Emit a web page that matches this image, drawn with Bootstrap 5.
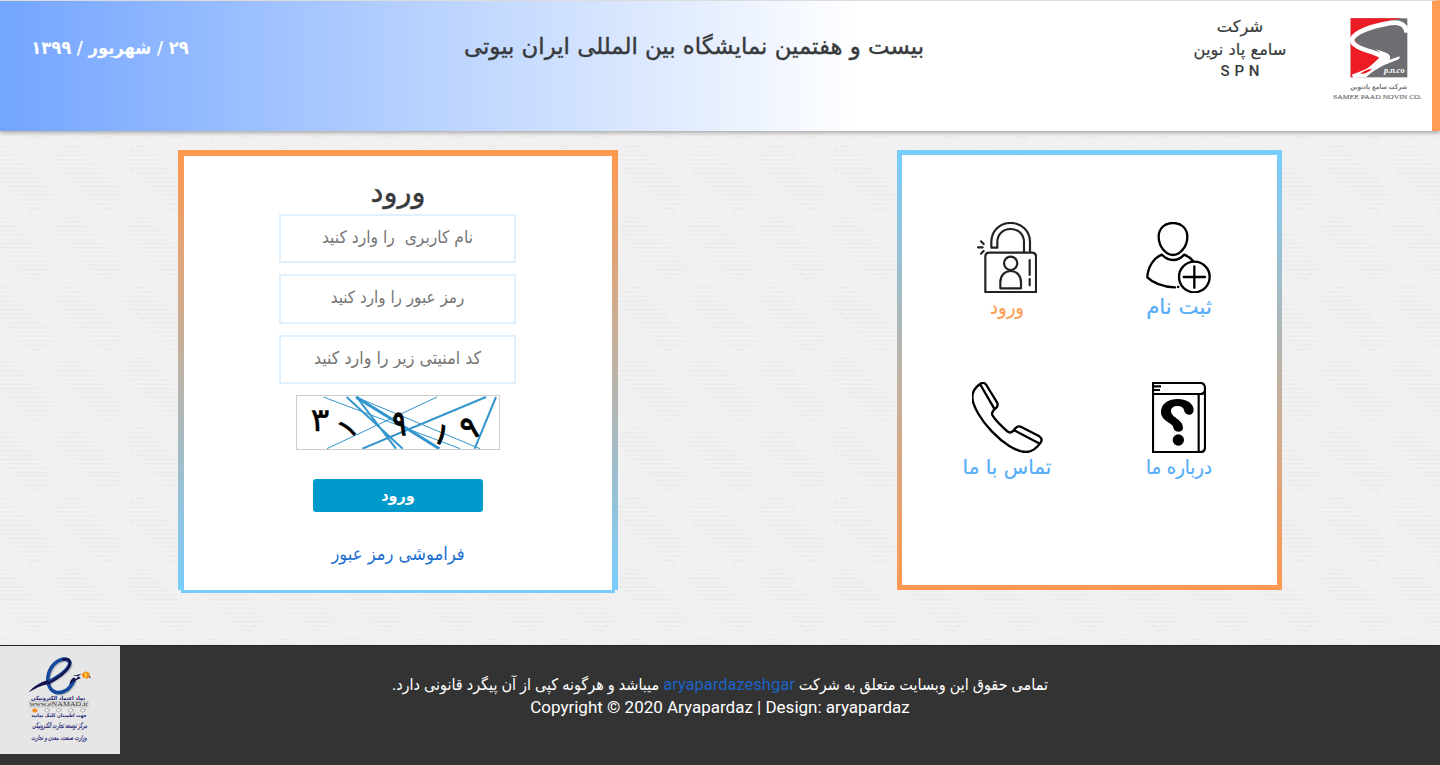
<!DOCTYPE html>
<html lang="fa" dir="rtl">
<head>
<meta charset="utf-8">
<title>ورود</title>
<link href="https://cdn.jsdelivr.net/npm/bootstrap@5.3.0/dist/css/bootstrap.min.css" rel="stylesheet">
<style>
body{font-family:"DejaVu Sans",sans-serif;color:#373a3c;background-color:#f1f1f1;overflow:hidden;
background-image:url("data:image/svg+xml,%3Csvg xmlns='http://www.w3.org/2000/svg' width='70.4' height='70.4' viewBox='0 0 16 16'%3E%3Cdefs%3E%3Cg id='h'%3E%3Cpath fill='%23f1f1f1' d='M0-.5L4.5 4l8 8L8 16.5 4 12.500l-8.500-8.500z'/%3E%3Cpath stroke='%23ebebeb' stroke-width='.3' d='M-1 1h2M-2 2h4M-3 3h6M-4 4h8M-3 5h8M-2 6h8M-1 7h8M0 8h8M1 9h8M2 10h8M3 11h8M4 12h8M5 13h6M6 14h4M7 15h2'/%3E%3Cpath stroke='%23e0e0e0' stroke-width='.25' stroke-linecap='square' d='M0 0h.01M-1 1h.01M1 1h.01M-2 2h.01M2 2h.01M-3 3h.01M3 3h.01M-4 4h.01M4 4h.01M-3 5h.01M5 5h.01M-2 6h.01M6 6h.01M-1 7h.01M7 7h.01M0 8h.01M8 8h.01M1 9h.01M9 9h.01M2 10h.01M10 10h.01M3 11h.01M11 11h.01M4 12h.01M12 12h.01M5 13h.01M11 13h.01M6 14h.01M10 14h.01M7 15h.01M9 15h.01'/%3E%3C/g%3E%3C/defs%3E%3Cpath stroke='%23efefef' stroke-width='.3' d='M0 0v16M1 0v16M2 0v16M3 0v16M4 0v16M5 0v16M6 0v16M7 0v16M8 0v16M9 0v16M10 0v16M11 0v16M12 0v16M13 0v16M14 0v16M15 0v16M16 0v16'/%3E%3Cuse href='%23h'/%3E%3Cuse href='%23h' x='16'/%3E%3C/svg%3E");
background-size:70.4px 70.4px;background-position:.4px 1.6px}
.topbar{height:131px;border-top:1px solid #dcdcdc;border-right:8px solid #ff9d57;background:linear-gradient(to right,#73a5ff,#fff 60%);box-shadow:0 1px 5px rgba(0,0,0,.4)}
.logo-cell{width:110px;padding-top:16px}
.company{width:164px;padding-top:14px;font-size:16.300px;line-height:23px;-webkit-text-stroke:.2px}
.company .latin{display:block;margin-top:-1px;font-family:Roboto,sans-serif;font-weight:500;font-size:15px;word-spacing:1px;-webkit-text-stroke:0}
.page-title{width:928px;font-size:22.8px;line-height:30px;padding-top:30px;margin:0;font-weight:400;-webkit-text-stroke:.4px}
.today{width:220px;margin-right:10px;padding-top:32px;font:700 18.2px/30px "DejaVu Sans Condensed","DejaVu Sans",sans-serif;color:#fff}
.stage{height:514px;padding:19px 158px 0 178px}
.side-box{width:385px;height:440px;border:5px solid;border-image:linear-gradient(#78cdfd,#ff9850) 1;background:#fff;padding:67px 12px 0 0}
.tiles{display:grid;grid-template-columns:172px 172px;grid-auto-rows:160px}
.tiles a{color:#55acf8;text-decoration:none;font-size:20px;line-height:28px;-webkit-text-stroke:.2px}
.tiles a.wide-label{font-size:21.300px}
.tiles a.slim-label{font-size:20px;font-family:"DejaVu Sans Condensed","DejaVu Sans",sans-serif}
.tiles svg{display:block;margin:0 auto}
.tiles a.current{color:#ff9d57}
.login-box{width:440px;height:440px;border:6px solid;border-bottom:0;border-image:linear-gradient(#ff9850,#78cdfd) 1;background:#fff}
.login-box::after{content:"";display:block;height:3px;width:434px;background:#78cdfd;position:absolute;left:-3px;bottom:-3px}
.login-box h1{font-size:29px;line-height:36px;padding-top:18px;margin:0 0 4px;font-weight:400;-webkit-text-stroke:.4px}
.field{width:237px;height:49px;margin:0 1px 11px 0;border:2px solid #dff0ff;border-radius:0;text-align:center;padding:0 0 4px;font:17.300px "DejaVu Sans Condensed","DejaVu Sans",sans-serif;background:#fff}
.field.pass{height:50px;font-size:16.900px}
.field.code{font-size:17.700px}
.field::placeholder{color:#757575;opacity:1}
.captcha{display:block;width:204px;height:55px;border:1px solid #ccc}
.enter{width:170px;height:33px;margin-top:29px;background:#0099cb;color:#fff;border:0;border-radius:3px;font:700 16px/30px "DejaVu Sans Condensed","DejaVu Sans",sans-serif;padding:1px 0 0}
.forgot{color:#1b6fd0;text-decoration:none;font:18.200px/30px "DejaVu Sans Condensed","DejaVu Sans",sans-serif;margin-top:27px}
.foot{height:120px;background:#333;color:#fff;border-top:1px solid #222}
.foot a{color:#1d63c4;text-decoration:none;font-size:16.500px}
.rights{font:16.050px/23px Roboto,"DejaVu Sans Condensed",sans-serif;padding-top:3px}
.copy{font:400 17px/22px Roboto,sans-serif}
.seal{width:120px;height:108px;background:#e6e6e6}
</style>
</head>
<body>
<header class="topbar d-flex text-center">
  <div class="logo-cell">
    <svg width="90" height="86" viewBox="456 53 270 258" style="direction:ltr">
      <rect x="512" y="57" width="170" height="177" fill="#6d6e71"/>
      <path d="M512 57h155C610 66 555 78 527 108c-10 18 8 32 40 44 30 12 42 12 34 28-16 22-50 38-75 54h-14z" fill="#ed1c24"/>
      <path d="M680 100c-2-28-28-34-55-28-50 8-98 26-108 46-6 20 30 31 65 42 24 8 36 16 24 30-20 18-60 32-88 42" fill="none" stroke="#fff" stroke-width="14"/>
      <path d="M585 150c30 8 52 14 44 31l30-10-1 7c-22 12-60 20-86 44l-14 12h-34c30-20 52-36 70-55 12-14 8-20-9-29z" fill="#fff"/>
      <path d="M542 224q8-12 34-16-10 13-34 16z" fill="#ed1c24"/>
      <text x="612" y="221" textLength="62" lengthAdjust="spacingAndGlyphs" font-family="Liberation Serif" font-style="italic" font-weight="700" font-size="23" fill="#fff">p.n.co</text>
      <text x="596" y="268" text-anchor="middle" textLength="170" lengthAdjust="spacingAndGlyphs" font-size="21" font-weight="700" fill="#77787b" font-family="DejaVu Sans">شرکت سامع پادنوین</text>
      <text x="459" y="298" textLength="266" lengthAdjust="spacingAndGlyphs" font-family="Liberation Serif" font-size="21" fill="#6d6e71" stroke="#6d6e71" stroke-width=".5">SAMEE PAAD NOVIN CO.</text>
    </svg>
  </div>
  <div class="company">شرکت<br>سامع پاد نوین<span class="latin">S P N</span></div>
  <h2 class="page-title">بیست و هفتمین نمایشگاه بین المللی ایران بیوتی</h2>
  <div class="today">۲۹ / شهریور / ۱۳۹۹</div>
</header>

<main class="stage d-flex justify-content-between">
  <nav class="side-box">
    <div class="tiles text-center">
      <a href="#" class="wide-label"><svg width="66" height="71" viewBox="590 36 198 213" fill="none" stroke="#000" stroke-width="7" stroke-linejoin="round" stroke-linecap="round">
        <path d="M671 39c-27 0-43 18-43 41 0 28 20 55 43 55s43-27 43-55c0-23-16-41-43-41z"/>
        <path d="M638 134c-27 10-43 40-44 68 18 18 46 28 83 30M638 134c10 11 21 16 33 16s24-5 33-16c12 4 20 10 27 19M686 231h1"/>
        <circle cx="735" cy="201" r="46"/><path d="M735 169v64M703 201h64"/></svg>ثبت نام</a>
      <a href="#" class="current slim-label"><svg width="60" height="71" viewBox="80 36 180 213" fill="none" stroke="#222" stroke-width="6.5" stroke-linejoin="round" stroke-linecap="round">
        <path d="M105 246V140q0-12 12-12h128q12 0 12 12v106zM123 113V96c0-32 24-57 58-57s58 25 58 57v30M123 113h18V96c0-22 16-39 40-39s40 17 40 39v30"/>
        <circle cx="181" cy="160" r="20"/><path d="M150 235v-18c0-20 12-34 31-34s31 14 31 34v18zM238 150v45M238 207v19M92 94l8 8M83 112h14M92 131l8-8"/></svg>ورود</a>
      <a href="#" class="slim-label"><svg width="54" height="71" viewBox="606 36 162 213" fill="none" stroke="#000" stroke-width="6.5">
        <path d="M609 39h142q14 0 14 17v176q0 14-14 14H609zM609 72h142q14 0 14-14M746 72v174M609 49h24M609 60h21"/>
        <path d="M633 123c2-24 24-36 50-36 30 0 48 16 48 32 0 9-6 15-14 15-9 0-14-6-15-14-2-8-9-12-19-12-13 0-20 6-20 15 0 20 36 25 36 50 0 8-6 12-14 12-10 0-15-6-16-16-6-12-38-18-36-46z" fill="#000" stroke="none"/><circle cx="685" cy="210" r="17" fill="#000" stroke="none"/></svg>درباره ما</a>
      <a href="#"><svg width="71" height="71" viewBox="66 36 213 213" fill="none" stroke="#000" stroke-width="7" stroke-linejoin="round">
        <path d="M89 42c-14 10-23 22-23 40 2 54 100 164 162 164 18 0 32-13 43-28 5-8 3-14-4-19l-54-28c-7-4-12-2-17 3-9 13-17 17-25 10-16-14-34-31-44-47-5-8 0-15 10-23 6-5 6-11 3-17l-32-52c-5-8-12-8-19-3zM89 42l44 76M190 180l80 42" transform="translate(1)"/></svg>تماس با ما</a>
    </div>
  </nav>

  <form class="login-box position-relative d-flex flex-column align-items-center">
    <h1>ورود</h1>
    <input class="field" type="text" placeholder="نام کاربری&nbsp; را وارد کنید">
    <input class="field pass" type="password" placeholder="رمز عبور را وارد کنید">
    <input class="field code" type="text" placeholder="کد امنیتی زیر را وارد کنید">
    <svg class="captcha" viewBox="381 48 606 159" style="direction:ltr">
      <g stroke="#3296cc" fill="none"><path stroke-width="3" d="M460 51l410 155M558 51l372 155M471 206L801 51"/><path stroke-width="6" d="M530 51l168 155M560 51l118 155M577 206L948 51M914 206l64-155"/><path stroke-width="9" d="M558 51l250 155"/></g>
      <g font-family="DejaVu Sans" font-size="88" fill="#000" stroke="#000" stroke-width="3" text-anchor="middle">
        <text transform="translate(450 152) scale(1.2 1.1)" stroke-width="1">۳</text><text transform="translate(552 166) rotate(-42)" stroke-width="2">۱</text><text transform="translate(688 166) scale(.85 1.15)" stroke-width="4">۹</text><text transform="translate(804 190) rotate(25)">۱</text><text transform="translate(908 174) rotate(-20) scale(1 1.1)">۹</text></g>
    </svg>
    <button class="enter" type="button">ورود</button>
    <a class="forgot" href="#">فراموشی رمز عبور</a>
  </form>
</main>

<footer class="foot d-flex flex-row-reverse">
  <svg class="seal flex-shrink-0" viewBox="0 18 360 324" style="direction:ltr">
    <path d="M140 129C170 113 205 92 209 72c2-12-12-18-28-12-26 10-42 42-36 70 6 28 30 34 52 22 12-6 20-20 27-34" fill="none" stroke="#999" stroke-width="9" transform="translate(4 4)" opacity=".5"/>
    <path d="M140 129C170 113 205 92 209 72c2-12-12-18-28-12-26 10-42 42-36 70 6 28 30 34 52 22 12-6 20-20 27-34" fill="none" stroke="#174a9c" stroke-width="11"/>
    <path d="M187 60c15-7 26 0 22 14-7 21-32 39-66 57" fill="none" stroke="#151552" stroke-width="8"/>
    <path d="M86 157c16-20 36-31 60-37l-2 13c-22 4-38 13-58 24z" fill="#151552"/>
    <path d="M208 134q3-16 14-22l5 5 9-8 6 6c-10 3-20 9-34 19zM218 108l26-7-8 7z" fill="#151552"/>
    <path d="M245 103l11-9 14 6-6 16-15-3z" fill="#f58a1f"/><path d="M254 98h6v14h-6z" fill="#fdd32c"/><path d="M267 105l7 10-8-3z" fill="#644"/>
    <g fill="#1c1c74" font-family="DejaVu Sans" text-anchor="middle">
      <text x="174" y="180" font-size="17" font-weight="700" textLength="162" lengthAdjust="spacingAndGlyphs">نماد اعتماد الکترونیکی</text>
      <text x="177" y="231" font-size="15" font-weight="700" textLength="166" lengthAdjust="spacingAndGlyphs">جهت اطمینان کلیک نمایید</text>
      <g stroke="#1c1c74" stroke-width=".6"><text x="179" y="265" font-size="23" font-style="italic" textLength="164" lengthAdjust="spacingAndGlyphs">مرکز توسعه تجارت الکترونیکی</text>
      <text x="177" y="299" font-size="20" font-style="italic" textLength="166" lengthAdjust="spacingAndGlyphs">وزارت صنعت، معدن و تجارت</text></g></g>
    <rect x="88" y="184" width="176" height="17" fill="#ddd" stroke="#999"/>
    <text x="89" y="199" textLength="175" lengthAdjust="spacingAndGlyphs" font-family="Liberation Serif" font-size="19" fill="#333">www.eNAMAD.ir</text>
    <path d="M95 211l8-6 10 4-2 6-8 3z" fill="#f58a1f"/>
    <path d="M133 211l7-5 9 3-3 6-7 1zM168 211l7-5 9 3-3 6-7 1zM204 211l7-5 9 3-3 6-7 1zM240 211l7-5 9 3-3 6-7 1z" fill="#fff" stroke="#888" stroke-width="2"/>
  </svg>
  <div class="flex-grow-1 text-center pt-4" style="margin-right:120px">
    <div class="rights">تمامی حقوق این وبسایت متعلق به شرکت <a href="#">aryapardazeshgar</a> میباشد و هرگونه کپی از آن پیگرد قانونی دارد.</div>
    <div class="copy" dir="ltr">Copyright © 2020 Aryapardaz | Design: aryapardaz</div>
  </div>
</footer>
<script src="https://cdn.jsdelivr.net/npm/bootstrap@5.3.0/dist/js/bootstrap.bundle.min.js"></script>
</body>
</html>
